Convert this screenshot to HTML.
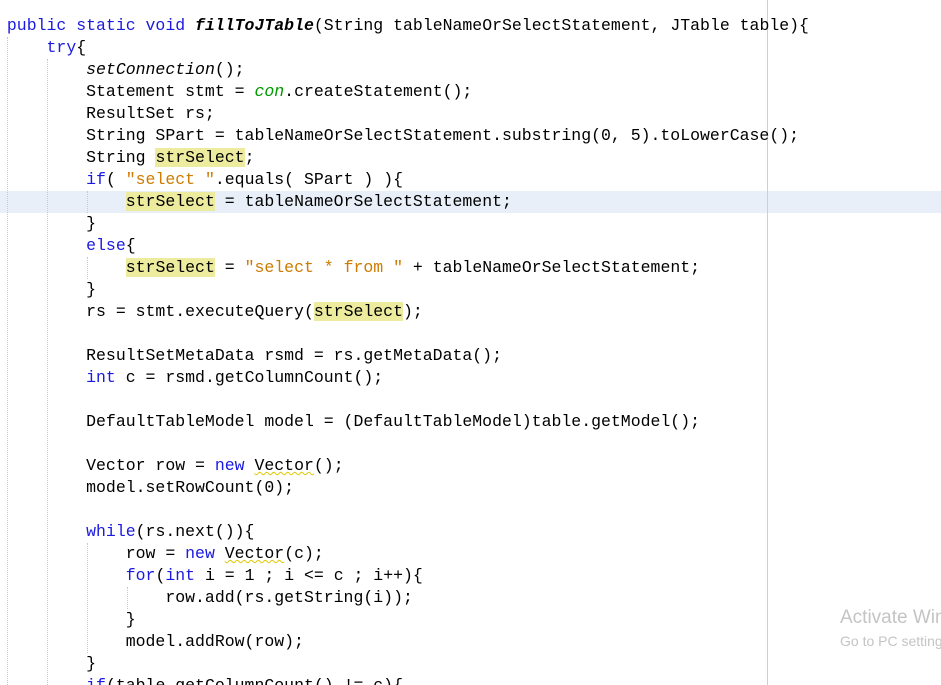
<!DOCTYPE html>
<html><head><meta charset="utf-8"><style>
html,body{margin:0;padding:0;background:#fff;width:941px;height:685px;overflow:hidden;position:relative}
.code{position:absolute;left:-3px;top:15px;margin:0;font-family:"Liberation Mono","Courier New",monospace;font-size:16.5px;line-height:22px;color:#000;white-space:pre}
.l{height:22px;position:relative}
.k{color:#1a1ae0}
.s{color:#ce7b00}
.g{color:#009900;font-style:italic}
.i{font-style:italic}
.b{font-weight:bold;font-style:italic}
.h{background:#eceb9e}
.u{text-decoration:underline wavy #e0c800;text-decoration-thickness:1px}
.hl{position:absolute;left:0;top:191px;width:941px;height:22px;background:#e9eff8}
.vl{position:absolute;left:767px;top:0;width:1px;height:685px;background:#f2c0c0}
.dg{position:absolute;width:0;border-left:1px dotted #c8c8c8}
.wm{position:absolute;left:840px;top:600px;width:101px;height:60px;overflow:hidden}
.wm1{position:absolute;left:0;top:7px;font-family:"Liberation Sans",sans-serif;font-size:19px;color:#c4c4c4;white-space:nowrap}
.wm2{position:absolute;left:0;top:33px;font-family:"Liberation Sans",sans-serif;font-size:14px;color:#c4c4c4;white-space:nowrap}
</style></head><body>
<div class="hl"></div>
<div class="vl"></div>
<div class="dg" style="left:7px;top:37px;height:648px"></div>
<div class="dg" style="left:47px;top:59px;height:626px"></div>
<div class="dg" style="left:87px;top:191px;height:22px"></div>
<div class="dg" style="left:87px;top:257px;height:22px"></div>
<div class="dg" style="left:87px;top:543px;height:110px"></div>
<div class="dg" style="left:127px;top:587px;height:22px"></div>
<pre class="code"><div class="l"> <span class="k">public static void</span> <span class="b">fillToJTable</span>(String tableNameOrSelectStatement, JTable table){</div><div class="l">     <span class="k">try</span>{</div><div class="l">         <span class="i">setConnection</span>();</div><div class="l">         Statement stmt = <span class="g">con</span>.createStatement();</div><div class="l">         ResultSet rs;</div><div class="l">         String SPart = tableNameOrSelectStatement.substring(0, 5).toLowerCase();</div><div class="l">         String <span class="h">strSelect</span>;</div><div class="l">         <span class="k">if</span>( <span class="s">"select "</span>.equals( SPart ) ){</div><div class="l">             <span class="h">strSelect</span> = tableNameOrSelectStatement;</div><div class="l">         }</div><div class="l">         <span class="k">else</span>{</div><div class="l">             <span class="h">strSelect</span> = <span class="s">"select * from "</span> + tableNameOrSelectStatement;</div><div class="l">         }</div><div class="l">         rs = stmt.executeQuery(<span class="h">strSelect</span>);</div><div class="l"> </div><div class="l">         ResultSetMetaData rsmd = rs.getMetaData();</div><div class="l">         <span class="k">int</span> c = rsmd.getColumnCount();</div><div class="l"> </div><div class="l">         DefaultTableModel model = (DefaultTableModel)table.getModel();</div><div class="l"> </div><div class="l">         Vector row = <span class="k">new</span> <span class="u">Vector</span>();</div><div class="l">         model.setRowCount(0);</div><div class="l"> </div><div class="l">         <span class="k">while</span>(rs.next()){</div><div class="l">             row = <span class="k">new</span> <span class="u">Vector</span>(c);</div><div class="l">             <span class="k">for</span>(<span class="k">int</span> i = 1 ; i &lt;= c ; i++){</div><div class="l">                 row.add(rs.getString(i));</div><div class="l">             }</div><div class="l">             model.addRow(row);</div><div class="l">         }</div><div class="l">         <span class="k">if</span>(table.getColumnCount() != c){</div></pre>
<div class="wm"><div class="wm1">Activate Windows</div><div class="wm2">Go to PC settings</div></div>
</body></html>
